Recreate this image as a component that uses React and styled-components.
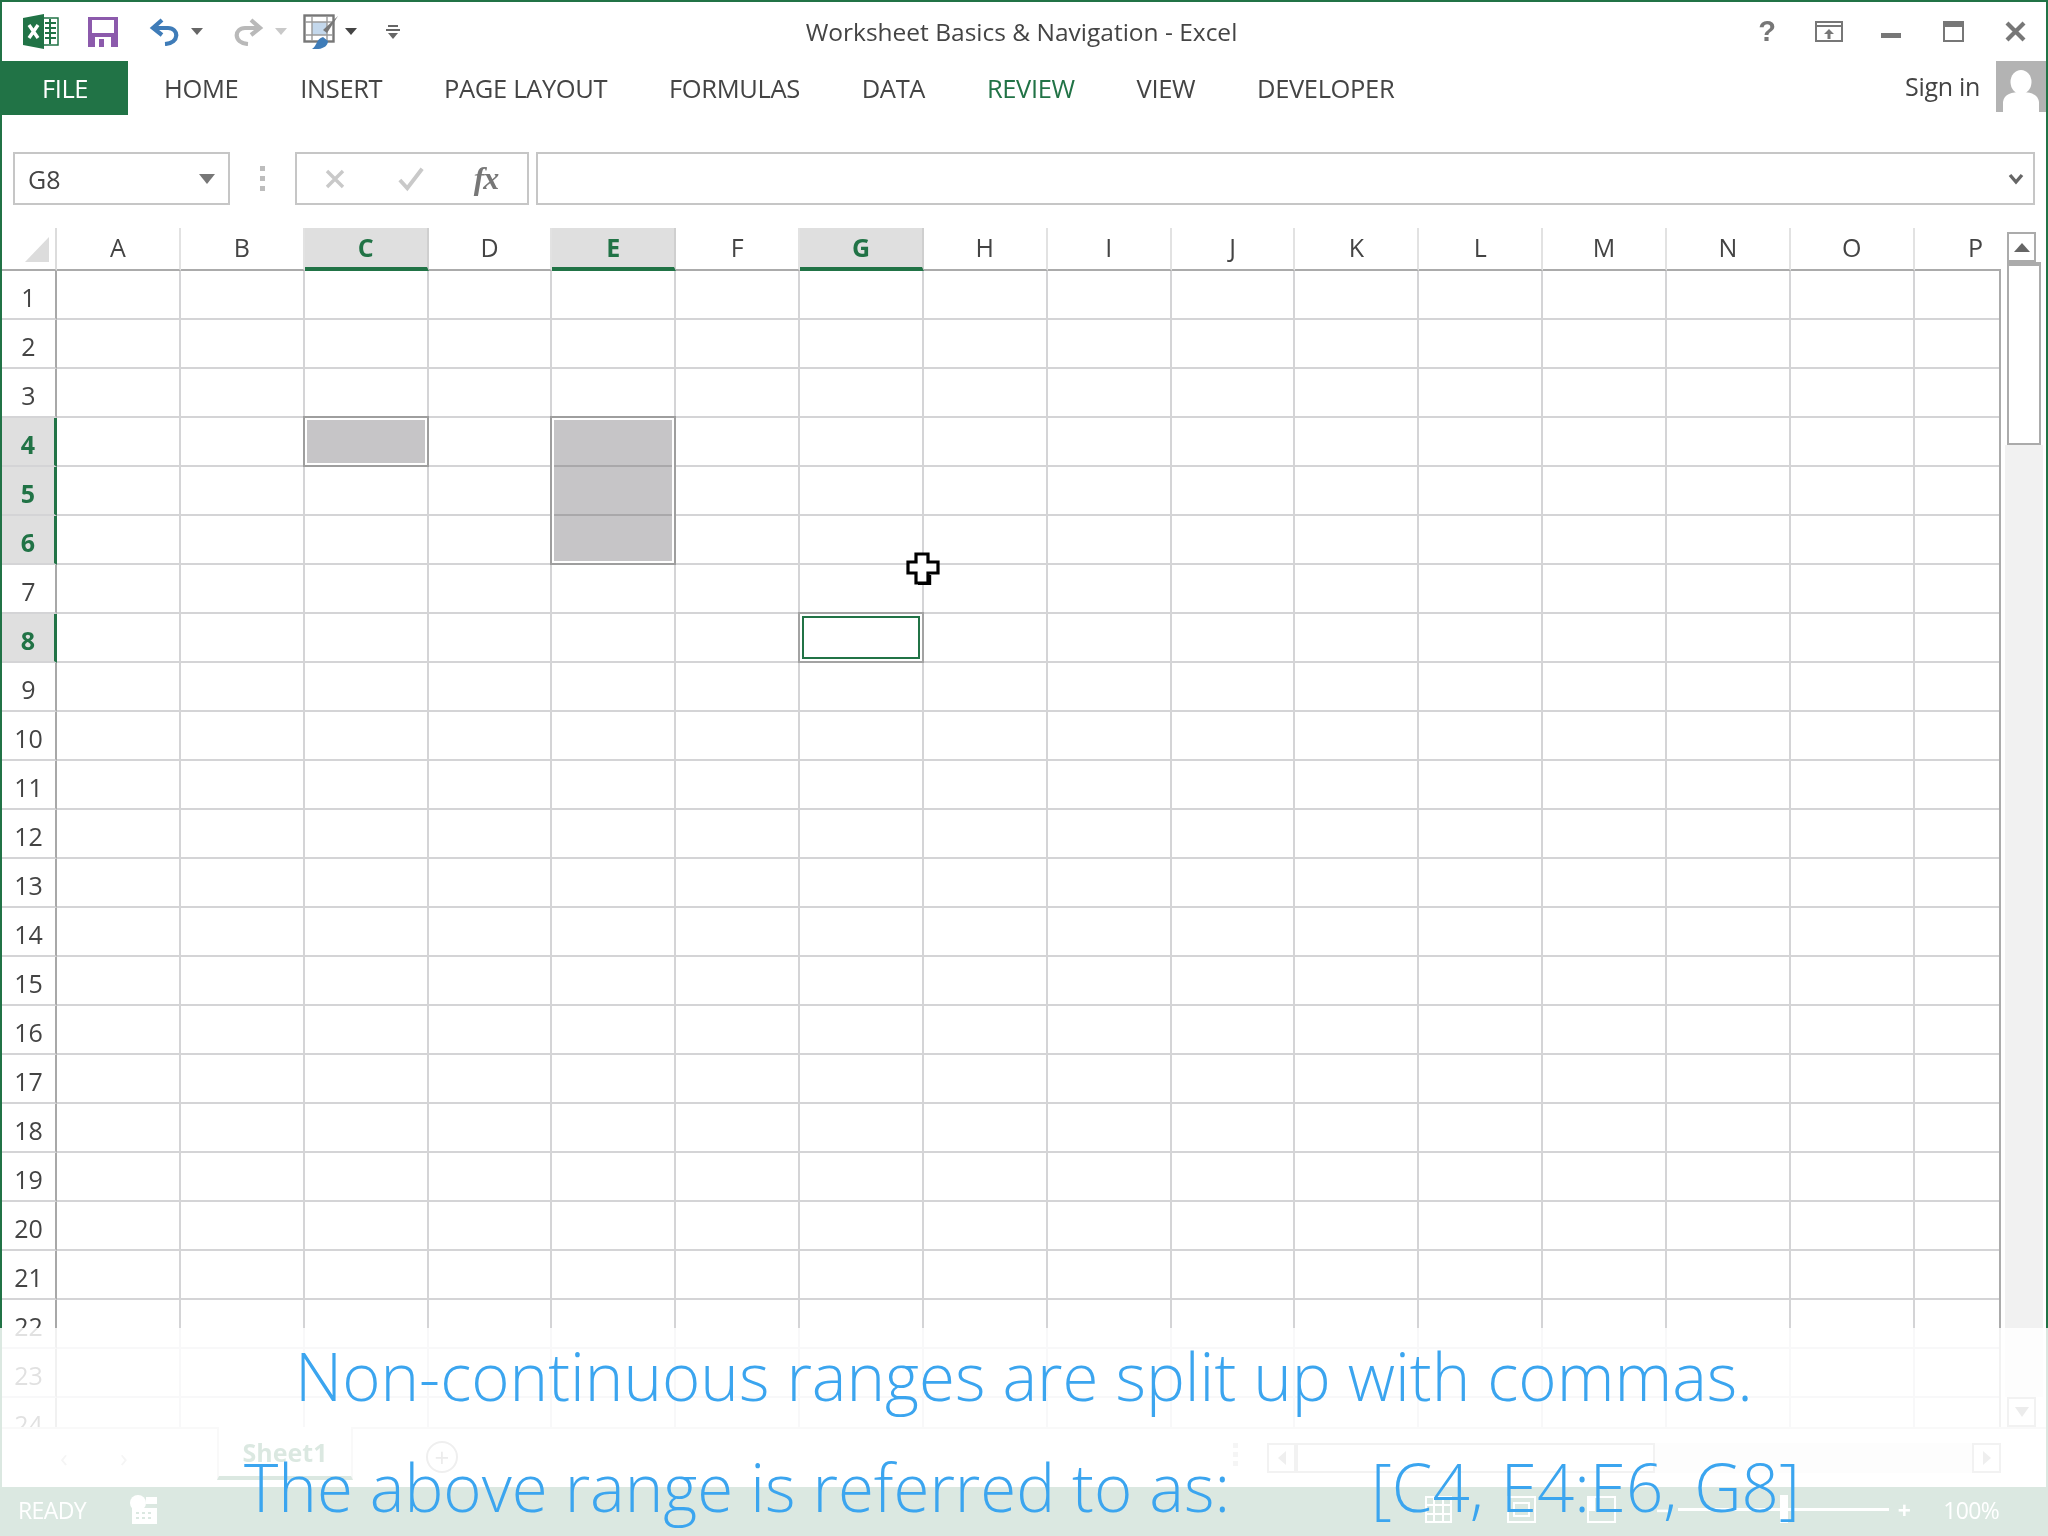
import styled, { createGlobalStyle } from "styled-components";

const GREEN = "#217346";
const COLS = "ABCDEFGHIJKLMNOP".split("");
const ACTIVE_COLS = ["C", "E", "G"];
const ACTIVE_ROWS = [4, 5, 6, 8];
const ROWS = Array.from({ length: 24 }, (_, i) => i + 1);
const TABS = ["HOME", "INSERT", "PAGE LAYOUT", "FORMULAS", "DATA", "REVIEW", "VIEW", "DEVELOPER"];

const GlobalStyle = createGlobalStyle`
  html, body {
    margin: 0;
    padding: 0;
    background: #fff;
  }
  body {
    width: 2048px;
    height: 1536px;
    overflow: hidden;
    font-family: "Open Sans", "Liberation Sans", sans-serif;
  }
`;

const Page = styled.div`
  position: relative;
  width: 2048px;
  height: 1536px;
  overflow: hidden;
`;

const Window = styled.div`
  display: flex;
  flex-direction: column;
  box-sizing: border-box;
  height: 1536px;
  background: #fff;
  border: 2px solid ${GREEN};
  border-bottom: 0;
  filter: blur(0.45px);
`;

const TitleBar = styled.div`
  display: grid;
  grid-template-columns: 1fr auto 1fr;
  align-items: center;
  height: 59px;
  flex: none;
`;

const Qat = styled.div`
  display: flex;
  align-items: center;
  padding-left: 21px;
`;

const QatItem = styled.div`
  display: flex;
  margin-left: ${(p) => p.$ml || 0}px;
`;

const Title = styled.div`
  font-size: 24.5px;
  color: #444;
  white-space: nowrap;
  padding-right: 5px;
`;

const WinButtons = styled.div`
  display: flex;
  justify-content: flex-end;
`;

const WinButton = styled.div`
  display: flex;
  align-items: center;
  justify-content: center;
  width: 62px;
  height: 40px;
  color: #777;
  font: bold 29px "Liberation Sans", sans-serif;
`;

const TabRow = styled.div`
  display: flex;
  align-items: center;
  height: 54px;
  flex: none;
`;

const FileTab = styled.div`
  display: flex;
  align-items: center;
  justify-content: center;
  width: 126px;
  height: 54px;
  background: ${GREEN};
  color: #fff;
  font-size: 25.5px;
  letter-spacing: -0.5px;
`;

const Tabs = styled.div`
  display: flex;
  gap: 61.8px;
  padding-left: 36px;
`;

const Tab = styled.div`
  font-size: 25.5px;
  letter-spacing: -0.35px;
  color: ${(p) => (p.$active ? GREEN : "#444")};
  white-space: nowrap;
`;

const SignIn = styled.div`
  display: flex;
  align-items: flex-start;
  gap: 16px;
  margin-left: auto;
  height: 54px;
  font-size: 25px;
  letter-spacing: -0.3px;
  color: #444;
`;

const SignInLabel = styled.span`
  padding-top: 8px;
`;

const Avatar = styled.div`
  display: flex;
  width: 50px;
  height: 51px;
  background: #b3b3b3;
`;

const FormulaBar = styled.div`
  display: flex;
  align-items: stretch;
  height: 53px;
  margin: 37px 11px 23px 11px;
  flex: none;
`;

const BoxBase = styled.div`
  box-sizing: border-box;
  display: flex;
  align-items: center;
  border: 2px solid #c6c6c6;
  background: #fff;
`;

const NameBox = styled(BoxBase)`
  width: 217px;
  padding: 0 13px;
  justify-content: space-between;
  font-size: 25px;
  color: #444;
`;

const GripDots = styled.div`
  display: flex;
  flex-direction: column;
  justify-content: center;
  gap: 5px;
  width: 65px;
  align-items: center;
  i {
    display: block;
    width: 5px;
    height: 5px;
    background: #bdbdbd;
  }
`;

const FxBox = styled(BoxBase)`
  width: 234px;
  padding-left: 25px;
`;

const FxButton = styled.div`
  display: flex;
  justify-content: center;
  width: 26px;
  margin-right: ${(p) => p.$mr || 0}px;
`;

const FxLabel = styled.span`
  font: italic bold 32px "Liberation Serif", serif;
  color: #777;
  letter-spacing: -1px;
`;

const FormulaInput = styled(BoxBase)`
  flex: 1;
  margin-left: 7px;
  justify-content: flex-end;
  padding-right: 9px;
`;

const SheetArea = styled.div`
  display: flex;
  flex: 1;
  min-height: 0;
`;

const Grid = styled.div`
  display: flex;
  flex-direction: column;
  width: 1999px;
  flex: none;
  overflow: hidden;
`;

const HeadRow = styled.div`
  display: grid;
  grid-template-columns: 55px repeat(16, 123.85px);
  height: 43px;
  flex: none;
`;

const Corner = styled.div`
  box-sizing: border-box;
  position: relative;
  border-bottom: 2px solid #ababab;
  border-right: 2px solid #dcdcdc;
  &::after {
    content: "";
    position: absolute;
    left: 23px;
    top: 9px;
    width: 24px;
    height: 25px;
    background: #dcdcdc;
    clip-path: polygon(100% 0, 100% 100%, 0 100%);
  }
`;

const ColHead = styled.div`
  box-sizing: border-box;
  display: flex;
  align-items: center;
  justify-content: center;
  padding-bottom: ${(p) => (p.$active ? 1 : 3)}px;
  font-size: 25px;
  font-weight: ${(p) => (p.$active ? 700 : 400)};
  color: ${(p) => (p.$active ? GREEN : "#444")};
  background: ${(p) => (p.$active ? "#dfdfdf" : "#fff")};
  border-right: 2px solid ${(p) => (p.$active ? "#cfcfcf" : "#e2e2e2")};
  border-bottom: ${(p) => (p.$active ? `4px solid ${GREEN}` : "2px solid #ababab")};
`;

const Body = styled.div`
  flex: 1;
  min-height: 0;
  overflow: hidden;
  border-right: 2px solid #ababab;
`;

const Row = styled.div`
  display: grid;
  grid-template-columns: 55px repeat(16, 123.85px);
  height: 49px;
`;

const RowHead = styled.div`
  box-sizing: border-box;
  display: flex;
  align-items: center;
  justify-content: center;
  padding-top: 5px;
  font-size: 25px;
  font-weight: ${(p) => (p.$active ? 700 : 400)};
  color: ${(p) => (p.$active ? GREEN : "#444")};
  background: ${(p) => (p.$active ? "#dfdfdf" : "#fff")};
  border-right: ${(p) => (p.$active ? `3px solid ${GREEN}` : "2px solid #a8a8a8")};
  border-bottom: 2px solid #d4d4d6;
`;

const Cell = styled.div`
  box-sizing: border-box;
  position: relative;
  border-right: 2px solid #d4d4d6;
  border-bottom: 2px solid #d4d4d6;
`;

const RangeFill = styled.div`
  position: absolute;
  z-index: 1;
  top: -2px;
  left: -2px;
  right: -2px;
  height: ${(p) => p.$rows * 49 + 2}px;
  box-sizing: border-box;
  border: 2px solid #9e9e9e;
  background: repeating-linear-gradient(to bottom, #c6c5c7 0 47px, #a9a8aa 47px 49px);
  box-shadow: inset 0 0 0 2px #fff;
`;

const ActiveCell = styled.div`
  position: absolute;
  z-index: 1;
  top: -2px;
  left: -2px;
  right: -2px;
  bottom: -2px;
  border: 2px solid #a3a3a3;
  background: #fff;
  box-shadow: inset 0 0 0 2px #fff, inset 0 0 0 4px ${GREEN};
`;

const VScroll = styled.div`
  display: flex;
  flex-direction: column;
  box-sizing: border-box;
  flex: 1;
  padding: 4px 5px 0 6px;
`;

const ScrollButton = styled.div`
  box-sizing: border-box;
  display: flex;
  align-items: center;
  justify-content: center;
  flex: none;
  width: 29px;
  height: 30px;
  border: 2px solid #ababab;
  background: #fff;
`;

const VThumb = styled.div`
  box-sizing: border-box;
  height: 183px;
  flex: none;
  border: 2px solid #ababab;
  border-top-width: 4px;
  background: #fff;
`;

const VTrack = styled.div`
  flex: 1;
  background: #f1f1f1;
  margin: 0 -2px;
`;

const SheetBar = styled.div`
  display: flex;
  align-items: flex-start;
  box-sizing: border-box;
  height: 60px;
  flex: none;
  padding-left: 32px;
  border-top: 2px solid #d8d8d8;
`;

const NavArrow = styled.div`
  display: flex;
  align-items: center;
  justify-content: center;
  width: 60px;
  height: 56px;
  color: #bdbdbd;
  font-size: 26px;
`;

const SheetTab = styled.div`
  box-sizing: border-box;
  display: flex;
  align-items: center;
  justify-content: center;
  width: 136px;
  height: 53px;
  margin-left: 63px;
  border-left: 2px solid #d8d8d8;
  border-right: 2px solid #d8d8d8;
  border-bottom: 4px solid ${GREEN};
  background: #fff;
  color: ${GREEN};
  font-size: 25px;
  font-weight: 700;
  margin-top: -2px;
`;

const AddSheet = styled.div`
  box-sizing: border-box;
  display: flex;
  align-items: center;
  justify-content: center;
  width: 32px;
  height: 32px;
  margin: 12px 0 0 73px;
  border: 2px solid #9a9a9a;
  border-radius: 50%;
  color: #8a8a8a;
  font-size: 26px;
  line-height: 1;
`;

const BarDots = styled(GripDots)`
  width: 6px;
  margin: 14px 0 0 774px;
  gap: 4px;
`;

const HScroll = styled.div`
  display: flex;
  margin: 14px 0 0 29px;
  height: 30px;
`;

const HThumb = styled.div`
  box-sizing: border-box;
  width: 359px;
  border: 2px solid #ababab;
  background: #fff;
`;

const HTrack = styled.div`
  width: 317px;
  background: #f1f1f1;
`;

const StatusBar = styled.div`
  display: flex;
  align-items: center;
  box-sizing: border-box;
  height: 49px;
  margin: 0 -2px;
  padding: 0 44px 4px 18px;
  flex: none;
  background: ${GREEN};
  color: #fff;
  font-size: 23px;
  letter-spacing: -0.6px;
`;

const StatusIcon = styled.div`
  display: flex;
  margin-left: ${(p) => p.$ml}px;
`;

const Zoom = styled.div`
  display: flex;
  align-items: center;
  margin-left: 40px;
  gap: 9px;
`;

const ZoomStep = styled.span`
  font-weight: 700;
`;

const Slider = styled.div`
  position: relative;
  width: 211px;
  height: 3px;
  background: #fff;
  &::after {
    content: "";
    position: absolute;
    left: 102px;
    top: -13px;
    width: 8px;
    height: 28px;
    background: #fff;
  }
`;

const ZoomLabel = styled.span`
  margin-left: 24px;
`;

const Caption = styled.div`
  position: absolute;
  left: 0;
  right: 0;
  bottom: 0;
  height: 208px;
  box-sizing: border-box;
  background: rgba(255, 255, 255, 0.84);
  color: #3ba5ef;
  font-size: 65.4px;
  font-weight: 300;
  line-height: 90px;
  white-space: nowrap;
`;

const CaptionTop = styled.div`
  display: flex;
  align-items: flex-end;
  height: 93px;
  margin-bottom: 21px;
  padding-left: 295px;
`;

const CaptionBottom = styled.div`
  display: flex;
  padding-left: 244px;
  gap: 141px;
`;

const Pointer = styled.svg`
  position: absolute;
  left: 906px;
  top: 552px;
`;

function ExcelLogo() {
  return (
    <svg width="36" height="35" viewBox="0 0 36 35">
      <rect x="19" y="4" width="16" height="27" fill="#fff" stroke={GREEN} strokeWidth="1.5" />
      <path d="M22 9h11M22 14h11M22 19h11M22 24h11M27 5v25" stroke={GREEN} strokeWidth="2" />
      <path d="M0 4 L21 0 V35 L0 31 Z" fill={GREEN} />
      <path d="M6 11 L15 24 M15 11 L6 24" stroke="#fff" strokeWidth="3.4" />
    </svg>
  );
}

function SaveIcon() {
  return (
    <svg width="30" height="30" viewBox="0 0 30 30">
      <path d="M0 0H30V30H0Z" fill="#8c5aac" />
      <rect x="4" y="3" width="22" height="13" fill="#fff" />
      <rect x="7" y="20" width="16" height="10" fill="#fff" />
      <rect x="11" y="22" width="5" height="8" fill="#8c5aac" />
    </svg>
  );
}

function ArrowIcon({ color, flip }) {
  return (
    <svg width="32" height="28" viewBox="0 0 32 28" style={flip ? { transform: "scaleX(-1)" } : undefined}>
      <g fill="none" stroke={color} strokeWidth="4.2">
        <path d="M13 2 L4 10 L13 17" />
        <path d="M4 10 H19 C30 10 31 25 16 26" />
      </g>
    </svg>
  );
}

// rot turns the little triangle for the scrollbar buttons
function Caret({ color = "#666", w = 12, h = 7, rot = 0 }) {
  return (
    <svg width={w} height={h} viewBox="0 0 12 7" preserveAspectRatio="none" style={rot ? { transform: `rotate(${rot}deg)` } : undefined}>
      <path d="M0 0H12L6 7Z" fill={color} />
    </svg>
  );
}

function PainterIcon() {
  return (
    <svg width="35" height="35" viewBox="0 0 35 35">
      <rect x="1.5" y="1.5" width="29" height="26" fill="#fff" stroke="#777" strokeWidth="2.4" />
      <rect x="9" y="8" width="15" height="13" fill="#c4d8ec" />
      <path d="M9 2v25M2 8h28M2 21h28M24 2v25" stroke="#9a9a9a" strokeWidth="1.4" />
      <path d="M35 2 L24 19 L20 16 Z" fill="#777" />
      <path d="M9 35 C14 32 13 25 20 23 L25 27 C25 33 18 36 9 35Z" fill="#3f7cb8" />
    </svg>
  );
}

function CustomizeIcon() {
  return (
    <svg width="14" height="14" viewBox="0 0 14 14">
      <path d="M2 1h10M0 5h14" stroke="#666" strokeWidth="1.8" />
      <path d="M2 8h10L7 14Z" fill="#666" />
    </svg>
  );
}

function RibbonIcon() {
  return (
    <svg width="28" height="21" viewBox="0 0 28 21">
      <rect x="1" y="1" width="26" height="19" fill="none" stroke="#777" strokeWidth="2" />
      <path d="M1 5h26" stroke="#777" strokeWidth="2" />
      <path d="M14 8 L19 13H15.5V18H12.5V13H9Z" fill="#777" />
    </svg>
  );
}

function MinimizeIcon() {
  return (
    <svg width="20" height="22" viewBox="0 0 20 22">
      <rect y="12" width="20" height="5" fill="#777" />
    </svg>
  );
}

function MaximizeIcon() {
  return (
    <svg width="21" height="21" viewBox="0 0 21 21">
      <rect x="1" y="1" width="19" height="19" fill="none" stroke="#777" strokeWidth="2" />
      <rect x="1" y="1" width="19" height="5" fill="#777" />
    </svg>
  );
}

function CloseIcon() {
  return (
    <svg width="21" height="21" viewBox="0 0 21 21">
      <path d="M2 2 L19 19 M19 2 L2 19" stroke="#777" strokeWidth="4.2" />
    </svg>
  );
}

function AvatarIcon() {
  return (
    <svg width="50" height="51" viewBox="0 0 50 51">
      <ellipse cx="25" cy="21" rx="10.5" ry="12" fill="#fff" />
      <path d="M7 51 V41 C8 33 16 31 25 31 C34 31 42 33 43 41 V51Z" fill="#fff" />
    </svg>
  );
}

function CrossMark() {
  return (
    <svg width="20" height="20" viewBox="0 0 20 20">
      <path d="M2 2 L18 18 M18 2 L2 18" stroke="#c9c9c9" strokeWidth="3.4" />
    </svg>
  );
}

function CheckMark() {
  return (
    <svg width="28" height="26" viewBox="0 0 28 26">
      <path d="M2 14 L10 23 L26 2" fill="none" stroke="#c9c9c9" strokeWidth="4.2" />
    </svg>
  );
}

function Chevron() {
  return (
    <svg width="16" height="12" viewBox="0 0 16 12">
      <path d="M2 2 L8 9 L14 2" fill="none" stroke="#666" strokeWidth="3.4" />
    </svg>
  );
}

function CalcIcon() {
  return (
    <svg width="28" height="29" viewBox="0 0 28 29">
      <circle cx="8" cy="8" r="8" fill="#fff" />
      <rect x="16" y="2" width="11" height="7" fill="#fff" />
      <path d="M2 13H27V29H2Z" fill="#fff" />
      <path d="M6 18h3M12 18h3M18 18h3M6 23h3M12 23h3M18 23h3" stroke={GREEN} strokeWidth="2" />
    </svg>
  );
}

function NormalView() {
  return (
    <svg width="27" height="27" viewBox="0 0 27 27">
      <rect x="1" y="1" width="25" height="25" fill="none" stroke="#fff" strokeWidth="2" />
      <path d="M9 1v25M18 1v25M1 9h25M1 18h25" stroke="#fff" strokeWidth="2" />
    </svg>
  );
}

function LayoutView() {
  return (
    <svg width="29" height="27" viewBox="0 0 29 27">
      <rect x="1" y="1" width="27" height="25" fill="none" stroke="#fff" strokeWidth="2" />
      <rect x="7" y="7" width="15" height="13" fill="none" stroke="#fff" strokeWidth="2" />
    </svg>
  );
}

function BreakView() {
  return (
    <svg width="29" height="27" viewBox="0 0 29 27">
      <rect x="1" y="1" width="27" height="25" fill="none" stroke="#fff" strokeWidth="2" />
      <rect x="1" y="1" width="7" height="14" fill="#fff" />
    </svg>
  );
}

function PointerIcon() {
  return (
    <Pointer width="34" height="33" viewBox="0 0 34 33">
      <path
        d="M10 2H22V10H32V21H22V31H10V21H2V10H10Z"
        fill="#fff"
        stroke="#000"
        strokeWidth="3.2"
      />
      <path d="M24 23V32.5H12" fill="none" stroke="#000" strokeWidth="2.4" />
    </Pointer>
  );
}

export default function App() {
  return (
    <Page>
      <GlobalStyle />
      <Window>
        <TitleBar>
          <Qat>
            <QatItem><ExcelLogo /></QatItem>
            <QatItem $ml={29}><SaveIcon /></QatItem>
            <QatItem $ml={31}><ArrowIcon color="#3f7cb8" /></QatItem>
            <QatItem $ml={10}><Caret /></QatItem>
            <QatItem $ml={29}><ArrowIcon color="#b9b9b9" flip /></QatItem>
            <QatItem $ml={11}><Caret color="#c9c9c9" /></QatItem>
            <QatItem $ml={16}><PainterIcon /></QatItem>
            <QatItem $ml={7}><Caret color="#444" /></QatItem>
            <QatItem $ml={29}><CustomizeIcon /></QatItem>
          </Qat>
          <Title>Worksheet Basics &amp; Navigation - Excel</Title>
          <WinButtons>
            <WinButton>?</WinButton>
            <WinButton><RibbonIcon /></WinButton>
            <WinButton><MinimizeIcon /></WinButton>
            <WinButton><MaximizeIcon /></WinButton>
            <WinButton><CloseIcon /></WinButton>
          </WinButtons>
        </TitleBar>

        <TabRow>
          <FileTab>FILE</FileTab>
          <Tabs>
            {TABS.map((t) => (
              <Tab key={t} $active={t === "REVIEW"}>{t}</Tab>
            ))}
          </Tabs>
          <SignIn>
            <SignInLabel>Sign in</SignInLabel>
            <Avatar><AvatarIcon /></Avatar>
          </SignIn>
        </TabRow>

        <FormulaBar>
          <NameBox>
            G8
            <Caret color="#777" w={16} h={10} />
          </NameBox>
          <GripDots><i /><i /><i /></GripDots>
          <FxBox>
            <FxButton $mr={50}><CrossMark /></FxButton>
            <FxButton $mr={49}><CheckMark /></FxButton>
            <FxButton><FxLabel>fx</FxLabel></FxButton>
          </FxBox>
          <FormulaInput><Chevron /></FormulaInput>
        </FormulaBar>

        <SheetArea>
          <Grid>
            <HeadRow>
              <Corner />
              {COLS.map((c) => (
                <ColHead key={c} $active={ACTIVE_COLS.includes(c)}>{c}</ColHead>
              ))}
            </HeadRow>
            <Body>
              {ROWS.map((r) => (
                <Row key={r}>
                  <RowHead $active={ACTIVE_ROWS.includes(r)}>{r}</RowHead>
                  {COLS.map((c) => (
                    <Cell key={c}>
                      {c === "C" && r === 4 && <RangeFill $rows={1} />}
                      {c === "E" && r === 4 && <RangeFill $rows={3} />}
                      {c === "G" && r === 8 && <ActiveCell />}
                    </Cell>
                  ))}
                </Row>
              ))}
            </Body>
          </Grid>
          <VScroll>
            <ScrollButton><Caret color="#666" w={16} h={9} rot={180} /></ScrollButton>
            <VThumb />
            <VTrack />
            <ScrollButton><Caret color="#888" w={14} h={10} /></ScrollButton>
          </VScroll>
        </SheetArea>

        <SheetBar>
          <NavArrow>‹</NavArrow>
          <NavArrow>›</NavArrow>
          <SheetTab>Sheet1</SheetTab>
          <AddSheet>+</AddSheet>
          <BarDots><i /><i /><i /></BarDots>
          <HScroll>
            <ScrollButton><Caret color="#999" w={14} h={8} rot={90} /></ScrollButton>
            <HThumb />
            <HTrack />
            <ScrollButton><Caret color="#999" w={14} h={8} rot={-90} /></ScrollButton>
          </HScroll>
        </SheetBar>

        <StatusBar>
          READY
          <StatusIcon $ml={44}><CalcIcon /></StatusIcon>
          <StatusIcon $ml={1267}><NormalView /></StatusIcon>
          <StatusIcon $ml={55}><LayoutView /></StatusIcon>
          <StatusIcon $ml={51}><BreakView /></StatusIcon>
          <Zoom>
            <ZoomStep>−</ZoomStep>
            <Slider />
            <ZoomStep>+</ZoomStep>
            <ZoomLabel>100%</ZoomLabel>
          </Zoom>
        </StatusBar>
      </Window>

      <Caption>
        <CaptionTop>Non-continuous ranges are split up with commas.</CaptionTop>
        <CaptionBottom>
          <span>The above range is referred to as:</span>
          <span>[C4, E4:E6, G8]</span>
        </CaptionBottom>
      </Caption>

      <PointerIcon />
    </Page>
  );
}
